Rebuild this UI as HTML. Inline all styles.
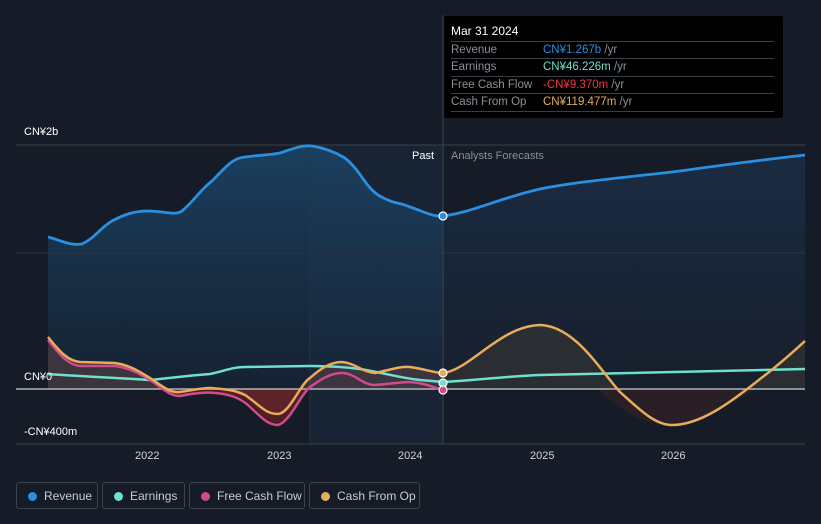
<!DOCTYPE html>
<html><head><meta charset="utf-8"><style>
html,body{margin:0;padding:0;background:#151c27;width:821px;height:524px;overflow:hidden;font-family:"Liberation Sans","Noto Sans CJK SC",sans-serif}
svg{position:absolute;left:0;top:0}
.tip{position:absolute;left:444px;top:16px;width:339px;height:102px;background:#000;border-radius:2px}
.tip .h{position:absolute;left:7px;top:8px;color:#fff;font-size:12px}
.row{position:absolute;left:7px;width:323px;height:17px;border-top:1px solid #3a3f47;font-size:11.5px;line-height:17px;color:#8a8f98}
.row span{position:absolute;left:92px}
.row i{font-style:normal;color:#8a8f98}
.leg{position:absolute;top:482px;height:27px;border:1px solid #3c424c;border-radius:3px;color:#c9ccd1;font-size:12px;line-height:27px;box-sizing:border-box}
.leg b{position:absolute;left:11px;top:9px;width:9px;height:9px;border-radius:50%}
.leg span{position:absolute;left:27px}
.t{position:absolute;font-size:11px;color:#fff}
.y{position:absolute;top:450px;font-size:11px;color:#d0d3d8}
</style></head><body>
<svg width="821" height="524">
<defs>
<linearGradient id="rv" x1="0" y1="0" x2="0" y2="1"><stop offset="0" stop-color="#1b4466" stop-opacity=".9"/><stop offset="1" stop-color="#17263a" stop-opacity=".6"/></linearGradient>
<linearGradient id="rf" x1="0" y1="0" x2="0" y2="1"><stop offset="0" stop-color="#1a2b42"/><stop offset="1" stop-color="#171f2c"/></linearGradient>
</defs>
<rect x="310" y="145" width="133" height="299" fill="#1a2a3d" opacity=".6"/>
<path d="M48,237 C60,240 70,246 82,244 C95,238 100,228 112,221 C125,214 135,211 148,211 C165,211 175,216 182,211 C195,200 200,190 212,181 C225,168 232,158 245,157 C260,155 270,155 280,153 C295,148 302,145 312,146 C325,148 335,152 345,158 C360,170 365,186 378,195 C395,205 400,202 410,207 C425,212 433,217 443,216 L443,389 L48,389 Z" fill="url(#rv)"/>
<path d="M443,216 C470,213 500,198 540,189 C580,181 640,176 680,171 C730,164 770,159 805,155 L805,389 L443,389 Z" fill="url(#rf)"/>
<line x1="16" y1="145" x2="805" y2="145" stroke="#3a404a"/>
<line x1="16" y1="253" x2="805" y2="253" stroke="#2b3441"/>
<line x1="16" y1="444" x2="805" y2="444" stroke="#3a404a"/>
<line x1="443" y1="15" x2="443" y2="444" stroke="#3a4452"/>
<line x1="310" y1="145" x2="310" y2="444" stroke="#22344a"/>
<path d="M48,337 C60,355 68,361 80,362 L115,363 C130,365 140,372 150,378 C165,388 170,393 180,392 C195,390 200,388 210,388 C225,389 235,390 245,395 C260,405 265,413 278,414 C290,413 300,384 310,378 C320,369 330,362 342,362 C355,363 362,372 375,373 C390,370 400,366 410,367 C425,369 435,373 443,373 L443,389 L48,389 Z" fill="#6b4a4a" opacity=".45"/>
<path d="M160,389 C170,393 175,395 180,395 C195,392 205,392 215,392 C230,393 240,396 248,402 C262,415 268,423 278,423 C290,420 298,398 310,389 Z" fill="#6b1f24" opacity=".7"/>
<path d="M443,373 C470,370 500,326 540,325 C575,326 600,370 620,392 C640,410 655,425 672,425 C700,425 730,403 760,379 C780,364 795,350 805,341 L805,389 L443,389 Z" fill="#3a3a36" opacity=".55"/>
<path d="M598,389 C615,406 640,425 672,425 C700,425 730,403 756,389 Z" fill="#2a1e27"/>
<line x1="16" y1="389" x2="805" y2="389" stroke="#b0b3b8" stroke-width="1.5"/>
<path d="M48,374 C90,377 120,378 150,380 C170,378 195,375 210,374 C225,371 232,367 245,367 L310,366 C330,366 345,367 360,369 C380,372 400,378 420,380 L443,382 C480,380 510,376 540,375 C600,373 700,372 805,369" fill="none" stroke="#6ee0cd" stroke-width="2.5"/>
<path d="M48,340 C60,355 68,365 80,366 L115,366 C130,368 140,374 150,380 C165,390 170,396 180,396 C195,393 205,392 215,393 C230,394 240,398 248,405 C262,418 268,425 278,425 C290,422 300,395 310,387 C320,380 330,373 342,373 C355,373 362,385 375,385 C390,384 400,382 410,382 C425,383 435,388 443,390" fill="none" stroke="#d04a8c" stroke-width="2.5"/>
<path d="M48,337 C60,352 68,361 80,362 L115,363 C130,365 140,372 150,378 C165,388 170,393 180,392 C195,390 200,388 210,388 C225,389 235,390 245,395 C260,405 265,414 278,414 C290,413 300,384 310,378 C320,369 330,362 342,362 C355,363 362,372 375,373 C390,370 400,366 410,367 C425,369 435,373 443,373 C470,370 500,326 540,325 C575,326 600,370 620,392 C640,410 655,425 672,425 C700,425 730,403 760,379 C780,364 795,350 805,341" fill="none" stroke="#e8ac5a" stroke-width="2.5"/>
<path d="M48,237 C60,240 70,246 82,244 C95,238 100,228 112,221 C125,214 135,211 148,211 C165,211 175,216 182,211 C195,200 200,190 212,181 C225,168 232,158 245,157 C260,155 270,155 280,153 C295,148 302,145 312,146 C325,148 335,152 345,158 C360,170 365,186 378,195 C395,205 400,202 410,207 C425,212 433,217 443,216 C470,213 500,198 540,189 C580,181 640,176 680,171 C730,164 770,159 805,155" fill="none" stroke="#2b8fe0" stroke-width="2.8"/>
<circle cx="443" cy="216" r="4" fill="#2b8fe0" stroke="#fff" stroke-width="1.2"/>
<circle cx="443" cy="373" r="4" fill="#e8ac5a" stroke="#fff" stroke-width="1.2"/>
<circle cx="443" cy="383" r="4" fill="#6ee0cd" stroke="#fff" stroke-width="1.2"/>
<circle cx="443" cy="390" r="4" fill="#d04a8c" stroke="#fff" stroke-width="1.2"/>
</svg>
<div class="t" style="left:24px;top:126px">CN¥2b</div>
<div class="t" style="left:24px;top:371px">CN¥0</div>
<div class="t" style="left:24px;top:426px">-CN¥400m</div>
<div class="t" style="left:412px;top:150px">Past</div>
<div class="t" style="left:451px;top:150px;color:#8a8f98">Analysts Forecasts</div>
<div class="y" style="left:135px">2022</div>
<div class="y" style="left:267px">2023</div>
<div class="y" style="left:398px">2024</div>
<div class="y" style="left:530px">2025</div>
<div class="y" style="left:661px">2026</div>
<div class="tip">
<div class="h">Mar 31 2024</div>
<div class="row" style="top:25px">Revenue<span style="color:#2b8fe0">CN¥1.267b <i>/yr</i></span></div>
<div class="row" style="top:42px">Earnings<span style="color:#6ee0cd">CN¥46.226m <i>/yr</i></span></div>
<div class="row" style="top:60px">Free Cash Flow<span style="color:#f0373f">-CN¥9.370m <i>/yr</i></span></div>
<div class="row" style="top:77px;border-bottom:1px solid #3a3f47">Cash From Op<span style="color:#e8ac5a">CN¥119.477m <i>/yr</i></span></div>
</div>
<div class="leg" style="left:16px;width:82px"><b style="background:#2b8fe0"></b><span>Revenue</span></div>
<div class="leg" style="left:102px;width:83px"><b style="background:#6ee0cd"></b><span>Earnings</span></div>
<div class="leg" style="left:189px;width:116px"><b style="background:#d04a8c"></b><span>Free Cash Flow</span></div>
<div class="leg" style="left:309px;width:111px"><b style="background:#e8ac5a"></b><span>Cash From Op</span></div>
</body></html>
